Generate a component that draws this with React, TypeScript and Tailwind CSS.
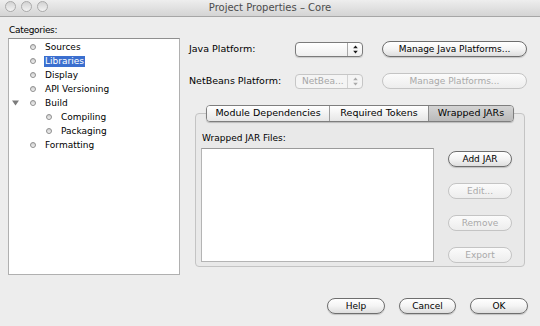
import React from "react";

type TreeItem = { label: string; level: number; selected?: boolean; expanded?: boolean };

const treeItems: TreeItem[] = [
  { label: "Sources", level: 0 },
  { label: "Libraries", level: 0, selected: true },
  { label: "Display", level: 0 },
  { label: "API Versioning", level: 0 },
  { label: "Build", level: 0, expanded: true },
  { label: "Compiling", level: 1 },
  { label: "Packaging", level: 1 },
  { label: "Formatting", level: 0 },
];

function AquaButton({
  label,
  disabled,
  className = "",
}: {
  label: string;
  disabled?: boolean;
  className?: string;
}) {
  return (
    <div
      className={`h-[16px] rounded-full border flex items-center justify-center text-[9px] leading-none ${
        disabled
          ? "border-[#c4c4c4] bg-gradient-to-b from-[#fbfbfb] to-[#ededed] text-[#a9a9a9]"
          : "border-[#6e6e6e] bg-gradient-to-b from-white via-[#f4f4f4] to-[#dedede] text-black shadow-[0_1px_1px_rgba(0,0,0,0.18)]"
      } ${className}`}
    >
      {label}
    </div>
  );
}

function Stepper({ disabled }: { disabled?: boolean }) {
  const fill = disabled ? "#a9a9a9" : "#1a1a1a";
  return (
    <svg width="5" height="9" viewBox="0 0 5 9">
      <polygon points="2.5,0.5 4.8,3.3 0.2,3.3" fill={fill} />
      <polygon points="0.2,5.7 4.8,5.7 2.5,8.5" fill={fill} />
    </svg>
  );
}

function Combo({ text, disabled }: { text?: string; disabled?: boolean }) {
  return (
    <div
      className={`w-[68px] h-[15px] rounded-[4px] border flex ${
        disabled
          ? "border-[#c6c6c6] bg-[#f4f4f4]"
          : "border-[#7b7b7b] bg-gradient-to-b from-white to-[#efefef] shadow-[0_1px_1px_rgba(0,0,0,0.15)]"
      }`}
    >
      <div className="flex-1 pl-[6px] text-[9px] leading-[13px] text-[#a6a6a6]">{text}</div>
      <div
        className={`w-[15px] border-l flex items-center justify-center ${
          disabled ? "border-[#d2d2d2]" : "border-[#a8a8a8]"
        }`}
      >
        <Stepper disabled={disabled} />
      </div>
    </div>
  );
}

function Tree() {
  return (
    <div className="mt-[1px] h-[237px] bg-white border border-[#b0b0b0] border-t-[#8f8f8f] pt-[1px]">
      {treeItems.map((item) => (
        <div
          key={item.label}
          className={`flex items-center h-[14px] text-[9px] ${item.level === 1 ? "pl-[16px]" : ""}`}
        >
          <div className="w-[12px] flex justify-center">
            {item.expanded && (
              <svg width="7" height="6" viewBox="0 0 7 6">
                <polygon points="0,0.5 7,0.5 3.5,5.5" fill="#7c7c7c" />
              </svg>
            )}
          </div>
          <div className="w-[24px] flex justify-center">
            <span className="w-[6px] h-[6px] rounded-full border border-[#8e8e8e] bg-gradient-to-b from-[#cfcfcf] to-[#f2f2f2]" />
          </div>
          {item.selected ? (
            <span className="-ml-[1px] px-[1px] leading-[11px] bg-[#3b6fcf] text-white">{item.label}</span>
          ) : (
            <span className="leading-[11px]">{item.label}</span>
          )}
        </div>
      ))}
    </div>
  );
}

export default function App() {
  return (
    <div className="w-[540px] h-[326px] bg-[#ededed] flex flex-col overflow-hidden font-['DejaVu_Sans',sans-serif] text-black">
      {/* title bar */}
      <div className="h-[17px] shrink-0 grid grid-cols-[1fr_auto_1fr] items-center bg-gradient-to-b from-[#eeeeee] to-[#d4d4d4] border-b border-[#a6a6a6]">
        <div className="flex gap-[5px] pl-[5px] -mt-[3px]">
          {[0, 1, 2].map((i) => (
            <span
              key={i}
              className="w-[11px] h-[11px] rounded-full border border-[#aaaaaa] bg-gradient-to-b from-[#d2d2d2] to-[#f3f3f3]"
            />
          ))}
        </div>
        <span className="text-[10px] leading-none text-[#4c4c4c]">Project Properties – Core</span>
        <div />
      </div>

      <div className="flex flex-1">
        {/* categories */}
        <div className="ml-[8px] w-[172px] flex flex-col">
          <div className="mt-[6px] h-[14px] leading-[14px] pl-[1px] text-[9px] tracking-[-0.3px]">Categories:</div>
          <Tree />
        </div>

        {/* right side */}
        <div className="ml-[9px] w-[339px] flex flex-col">
          <div className="mt-[24px] h-[16px] flex items-center">
            <div className="w-[106px] text-[9.5px]">Java Platform:</div>
            <Combo />
            <AquaButton label="Manage Java Platforms..." className="ml-[19px] w-[145px]" />
          </div>
          <div className="mt-[16px] h-[16px] flex items-center">
            <div className="w-[106px] text-[9.5px]">NetBeans Platform:</div>
            <Combo text="NetBea..." disabled />
            <AquaButton label="Manage Platforms..." disabled className="ml-[19px] w-[145px]" />
          </div>

          <div className="mt-[16px] ml-[6px] w-[330px] flex flex-col">
            <div className="relative z-10 ml-[11px] flex h-[17px] w-[308px] rounded-[4px] border border-[#7e7e7e] overflow-hidden shadow-[0_1px_1px_rgba(0,0,0,0.2)] text-[9.5px]">
              <div className="w-[123px] flex items-center justify-center border-r border-[#9c9c9c] bg-gradient-to-b from-white to-[#e6e6e6]">
                Module Dependencies
              </div>
              <div className="w-[99px] flex items-center justify-center border-r border-[#8c8c8c] bg-gradient-to-b from-white to-[#e6e6e6]">
                Required Tokens
              </div>
              <div className="flex-1 flex items-center justify-center bg-gradient-to-b from-[#d4d4d4] to-[#bababa]">
                Wrapped JARs
              </div>
            </div>
            <div className="-mt-[9px] h-[154px] rounded-[4px] border border-[#c4c4c4] bg-[#e9e9e9] pt-[18px]">
              <div className="h-[12px] leading-[12px] pl-[6px] text-[9px]">Wrapped JAR Files:</div>
              <div className="mt-[4px] pl-[5px] flex">
                <div className="w-[233px] h-[114px] bg-white border border-[#b4b4b4] border-t-[#9a9a9a]" />
                <div className="ml-[14px] w-[64px] pt-[3px] flex flex-col gap-[16px]">
                  <AquaButton label="Add JAR" />
                  <AquaButton label="Edit..." disabled />
                  <AquaButton label="Remove" disabled />
                  <AquaButton label="Export" disabled />
                </div>
              </div>
            </div>
          </div>

          <div className="mt-[31px] flex justify-end gap-[14px]">
            <AquaButton label="Help" className="w-[58px]" />
            <AquaButton label="Cancel" className="w-[57px]" />
            <AquaButton label="OK" className="w-[58px]" />
          </div>
        </div>
      </div>
    </div>
  );
}
